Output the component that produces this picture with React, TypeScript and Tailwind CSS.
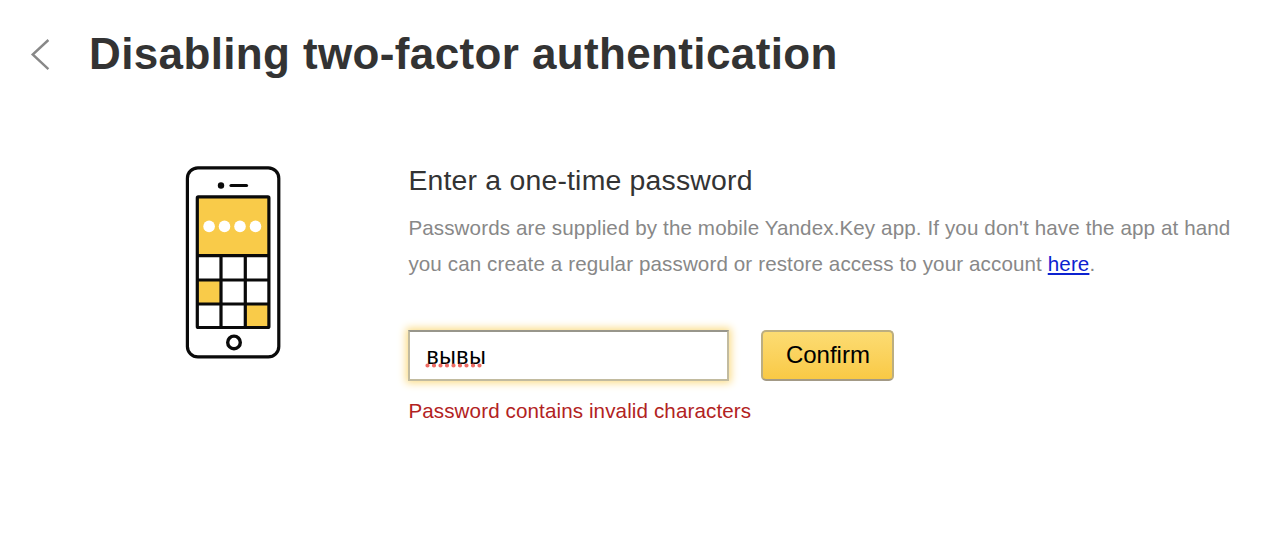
import React from 'react';

const keypadFill = '#f9cb49';

const PhoneIcon: React.FC = () => (
  <svg width="96" height="194" viewBox="185 165 96 194" fill="none" stroke="#0a0a0a" strokeWidth="3.2" aria-hidden="true">
    <rect x="187.4" y="167.9" width="91.4" height="189" rx="10.5" fill="#fff" />
    <circle cx="221" cy="185.5" r="3.2" fill="#0a0a0a" stroke="none" />
    <path d="M231 185.5h15.5" strokeLinecap="round" />

    {/* Screen and coloured keys */}
    <rect x="197" y="196.8" width="72.5" height="59" fill={keypadFill} stroke="none" />
    <rect x="197" y="280" width="24" height="24" fill={keypadFill} stroke="none" />
    <rect x="245.3" y="304" width="24" height="24" fill={keypadFill} stroke="none" />
    <rect x="197.3" y="196.9" width="71.6" height="130.6" rx="1" />
    <path d="M197 255.7h72M197 280h72M197 304h72M221 256v71M245.3 256v71" />

    <g fill="#fff" stroke="none">
      <circle cx="209.1" cy="226.4" r="5.8" />
      <circle cx="224.5" cy="226.4" r="5.8" />
      <circle cx="240" cy="226.4" r="5.8" />
      <circle cx="255.5" cy="226.4" r="5.8" />
    </g>
    <circle cx="234" cy="342.4" r="6.3" strokeWidth="3.4" />
  </svg>
);

const App: React.FC = () => {
  return (
    <main className="h-[549px] w-[1280px] overflow-hidden bg-white font-['Liberation_Sans',Arial,sans-serif] text-[#333]">
      <header className="flex items-start pt-[29px] pl-[30px]">
        <button type="button" aria-label="Back" className="mt-[9px] mr-[39px]">
          <svg width="20" height="34" viewBox="0 0 20 34" fill="none" stroke="#888" strokeWidth="2.4">
            <path d="M18.4 2 2.7 16.5l15.7 14.7" />
          </svg>
        </button>
        <h1 className="text-[44px] leading-[50px] font-bold tracking-[0.37px] whitespace-nowrap">Disabling two-factor authentication</h1>
      </header>

      <section className="flex items-start pt-[86px] pl-[185px]">
        <PhoneIcon />

        <div className="ml-[127.4px]">
          <h2 className="text-[28.4px] leading-[30px] tracking-[0.2px] whitespace-nowrap">Enter a one-time password</h2>
          <p className="mt-[15px] text-[20.6px] leading-[35.5px] tracking-[0.11px] whitespace-nowrap text-[#888]">
            Passwords are supplied by the mobile Yandex.Key app. If you don't have the app at hand
            <br />
            you can create a regular password or restore access to your account{' '}
            <a href="#" className="text-[#0c22d0] underline decoration-[1.5px] underline-offset-[2px]">here</a>.
          </p>

          <form className="mt-[49px] flex">
            <div className="flex h-[51px] w-[321px] items-center border-2 border-[#c2bb9f] border-t-[#98968b] bg-white pl-4 text-[23px] text-black shadow-[0_0_8px_2px_#fbdc86]">
              <span className="relative top-px tracking-[0.6px]">
                вывы
                <svg className="absolute top-6 -left-px" width="60" height="5" aria-hidden="true">
                  <path d="M2.5 2.5h55" stroke="#ee6b64" strokeWidth="4.2" strokeLinecap="round" strokeDasharray="0 6.5" />
                </svg>
              </span>
            </div>
            <button type="button" className="ml-8 h-[51px] w-[133px] rounded-[5px] border-2 border-[#bcae80] border-b-[#a39a86] bg-linear-to-b from-[#fcdc72] to-[#f9c944] pb-0.5 text-[24px] text-black">
              Confirm
            </button>
          </form>

          <p className="mt-[18px] text-[20.6px] leading-6 tracking-[0.11px] text-[#b22222]">Password contains invalid characters</p>
        </div>
      </section>
    </main>
  );
};

export default App;
